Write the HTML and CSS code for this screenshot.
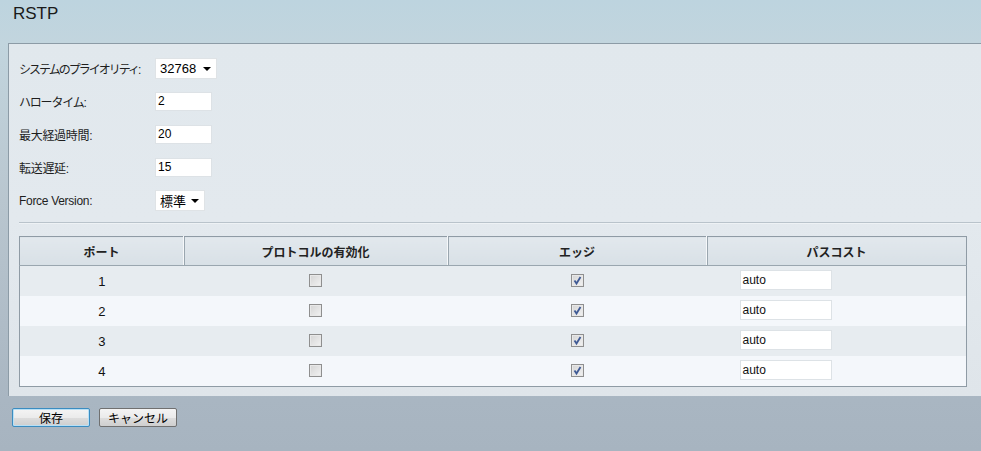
FILE: index.html
```html
<!DOCTYPE html>
<html lang="ja">
<head>
<meta charset="utf-8">
<title>RSTP</title>
<link rel="stylesheet" href="styles.css">
</head>
<body>
<div class="page">
  <h1 class="title">RSTP</h1>
  <div class="panel">
    <div class="form">
      <div class="row">
        <span class="label kana">システムのプライオリティ:</span>
        <div class="select sel-wide"><span>32768</span><i class="arrow"></i></div>
      </div>
      <div class="row">
        <span class="label kana2">ハロータイム:</span>
        <div class="input">2</div>
      </div>
      <div class="row">
        <span class="label">最大経過時間:</span>
        <div class="input">20</div>
      </div>
      <div class="row">
        <span class="label">転送遅延:</span>
        <div class="input">15</div>
      </div>
      <div class="row">
        <span class="label">Force Version:</span>
        <div class="select sel-narrow"><span>標準</span><i class="arrow"></i></div>
      </div>
    </div>
    <div class="sep"></div>
    <table class="grid">
      <thead>
        <tr>
          <th class="c1">ポート</th>
          <th class="c2">プロトコルの有効化</th>
          <th class="c3">エッジ</th>
          <th class="c4">パスコスト</th>
        </tr>
      </thead>
      <tbody>
        <tr>
          <td>1</td>
          <td><span class="cb"></span></td>
          <td><span class="cb"><svg viewBox="0 0 11 11" class="tick"><path d="M2.5 5.5 L4.5 8.5 L8.5 2" /></svg></span></td>
          <td class="cost"><div class="input wide">auto</div></td>
        </tr>
        <tr>
          <td>2</td>
          <td><span class="cb"></span></td>
          <td><span class="cb"><svg viewBox="0 0 11 11" class="tick"><path d="M2.5 5.5 L4.5 8.5 L8.5 2" /></svg></span></td>
          <td class="cost"><div class="input wide">auto</div></td>
        </tr>
        <tr>
          <td>3</td>
          <td><span class="cb"></span></td>
          <td><span class="cb"><svg viewBox="0 0 11 11" class="tick"><path d="M2.5 5.5 L4.5 8.5 L8.5 2" /></svg></span></td>
          <td class="cost"><div class="input wide">auto</div></td>
        </tr>
        <tr>
          <td>4</td>
          <td><span class="cb"></span></td>
          <td><span class="cb"><svg viewBox="0 0 11 11" class="tick"><path d="M2.5 5.5 L4.5 8.5 L8.5 2" /></svg></span></td>
          <td class="cost"><div class="input wide">auto</div></td>
        </tr>
      </tbody>
    </table>
  </div>
  <div class="buttons">
    <button class="btn primary">保存</button>
    <button class="btn">キャンセル</button>
  </div>
</div>
</body>
</html>
```

FILE: styles.css
```css
html, body {
  margin: 0;
  padding: 0;
}
body {
  width: 981px;
  height: 451px;
  overflow: hidden;
  font-family: "Liberation Sans", "Noto Sans CJK JP", Arial, sans-serif;
  font-size: 12px;
  color: #000;
  background: linear-gradient(180deg, #bdd4df 0px, #c2d5de 43px, #b9c6cf 200px, #a9b6c2 400px, #a7b4c0 451px);
}
.page {
  display: flex;
  flex-direction: column;
}
.title {
  margin: 0;
  height: 43px;
  box-sizing: border-box;
  padding: 3px 0 0 13px;
  font-size: 17px;
  font-weight: normal;
  color: #1a1a1a;
  line-height: 22px;
}
.panel {
  margin-left: 8px;
  border-top: 1px solid #8c9ba6;
  border-left: 1px solid #8c9ba6;
  background: linear-gradient(180deg, #e1e8ed 0%, #e3e9ee 50%, #dfe5ea 100%);
  padding: 8px 15px 10px 10px;
  height: 353px;
  box-sizing: border-box;
}
.form {
  display: flex;
  flex-direction: column;
}
.row {
  display: flex;
  align-items: center;
  height: 33px;
}
.label {
  flex: 0 0 136px;
  white-space: nowrap;
  color: #1e1e1e;
  letter-spacing: -0.3px;
}
.label.kana {
  letter-spacing: -2px;
}
.label.kana2 {
  letter-spacing: -1.2px;
}
.input {
  box-sizing: border-box;
  width: 57px;
  height: 19px;
  background: #fff;
  border: 1px solid #dde2e6;
  padding: 0 0 0 2px;
  line-height: 17px;
  font-size: 12px;
}
.input.wide {
  width: 92px;
  height: 20px;
  line-height: 18px;
}
.select {
  box-sizing: border-box;
  height: 21px;
  background: #fff;
  border: 1px solid #dfe3e6;
  display: flex;
  align-items: center;
  justify-content: space-between;
  padding: 0 5px 0 4px;
  font-size: 13px;
}
.sel-wide { width: 62px; }
.sel-narrow { width: 50px; }
.arrow {
  width: 0;
  height: 0;
  border-left: 4px solid transparent;
  border-right: 4px solid transparent;
  border-top: 4px solid #000;
  margin-top: 1px;
}
.sep {
  height: 1px;
  background: #b9c3cb;
  margin: 5px -15px 0 0;
  border-bottom: 1px solid #eef2f5;
}
.grid {
  margin-top: 12px;
  width: 948px;
  border-collapse: collapse;
  border: 1px solid #8f9ba5;
  table-layout: fixed;
}
.grid th {
  height: 28px;
  background: linear-gradient(180deg, #e2e8ed, #d8e0e6);
  font-weight: bold;
  font-size: 12px;
  color: #222;
  border-bottom: 1px solid #9aa6af;
  border-left: 1px solid #f6f8fa;
  box-shadow: inset 1px 0 0 #9aa6af;
  padding: 0;
}
.grid th.c1 { width: 163px; border-left: none; box-shadow: none; }
.grid th.c2 { width: 263px; }
.grid th.c3 { width: 258px; }
.grid td {
  height: 30px;
  padding: 0;
  text-align: center;
  font-size: 13px;
  color: #111;
}
.grid tbody tr:nth-child(odd) td { background: #e7ecf0; }
.grid tbody tr:nth-child(even) td { background: #f4f7fb; }
.grid td.cost {
  text-align: left;
  padding-left: 33px;
}
.grid td.cost .input { font-size: 12px; margin-top: -2px; }
.cb {
  display: inline-block;
  vertical-align: middle;
  width: 13px;
  height: 13px;
  box-sizing: border-box;
  border: 1px solid #8f8f8f;
  background: linear-gradient(135deg, #d4d4d4, #f2f2f2);
  box-shadow: inset 0 0 0 1px #e8e8e8;
  margin-top: -4px;
}
.tick {
  display: block;
  width: 11px;
  height: 11px;
}
.tick path {
  fill: none;
  stroke: #3f5a95;
  stroke-width: 1.8;
}
.buttons {
  display: flex;
  gap: 9px;
  padding: 12px 0 0 12px;
}
.btn {
  width: 78px;
  height: 19px;
  box-sizing: border-box;
  font-family: "Noto Sans CJK JP", "Liberation Sans", sans-serif;
  font-size: 12px;
  line-height: 15px;
  padding: 0;
  color: #000;
  border: 1px solid #707070;
  border-radius: 2px;
  background: linear-gradient(180deg, #f4f4f4 0%, #ebebeb 50%, #dcdcdc 55%, #cfcfcf 100%);
}
.btn.primary {
  border-color: #3b8cc0;
  box-shadow: inset 0 0 0 1px #b8e0f6;
}
```
